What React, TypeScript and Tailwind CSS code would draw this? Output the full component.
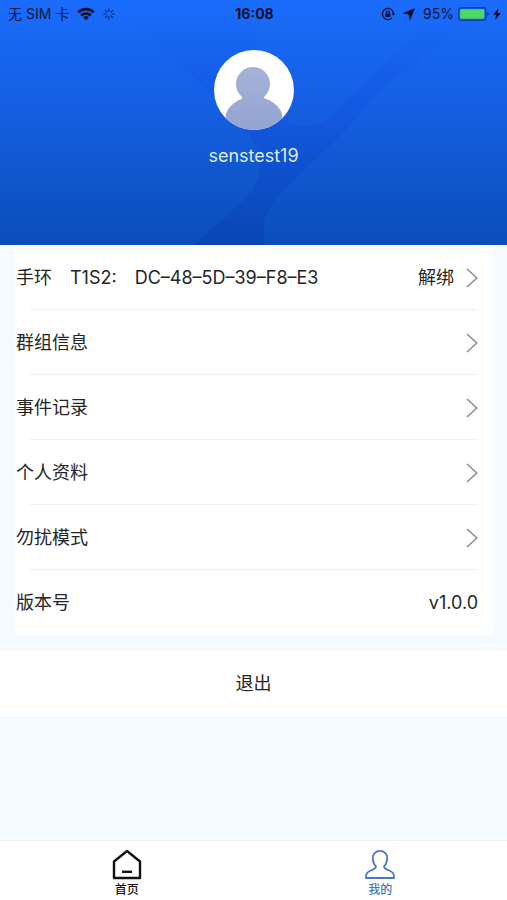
import type { ReactNode } from "react";

type MenuItem = {
  label: string;
};

const menu: MenuItem[] = [
  { label: "群组信息" },
  { label: "事件记录" },
  { label: "个人资料" },
  { label: "勿扰模式" },
];

const spokes = [0, 45, 90, 135, 180, 225, 270, 315];

const StatusBar = () => {
  return (
    <div className="relative flex h-7 items-center pr-1.5 pl-2 text-sm text-[#04163f]">
      <div className="flex flex-1 items-center gap-2">
        <span>无 SIM 卡</span>
        <svg width="18" height="14" viewBox="0 0 18 14" fill="none" stroke="#020d2b" strokeWidth="2.6">
          <path d="M1.2 5.4a11 11 0 0 1 15.6 0" />
          <path d="M4.2 8.5a6.8 6.8 0 0 1 9.6 0" />
          <path d="M9 13.2 6.2 10.4a4 4 0 0 1 5.6 0Z" fill="#020d2b" stroke="none" />
        </svg>
        <svg width="12" height="12" viewBox="0 0 12 12" stroke="#08307f" strokeWidth="1.2" strokeLinecap="round">
          {spokes.map((deg) => (
            <path key={deg} d="M6 .8v2.4" transform={`rotate(${deg} 6 6)`} />
          ))}
        </svg>
      </div>
      <span className="font-bold text-[#020d2b]">16:08</span>
      <div className="flex flex-1 items-center justify-end">
        <svg className="mr-2" width="14" height="14" viewBox="0 0 14 14" fill="none" stroke="#020d2b" strokeWidth="1.2">
          <path d="M11 10.8A5.6 5.6 0 1 1 12.5 6.4" />
          <path d="M10.6 6.3h3.4l-1.7 2.4z" fill="#020d2b" stroke="none" />
          <rect x="4.4" y="6.4" width="5" height="3.6" rx=".5" fill="#020d2b" stroke="none" />
          <path d="M5.4 6.6V5.5a1.5 1.5 0 0 1 3 0v1.1" />
        </svg>
        <svg className="mr-2" width="12" height="12" viewBox="0 0 12 12" fill="#020d2b" stroke="#020d2b" strokeWidth=".8" strokeLinejoin="round">
          <path d="M11.400.8 7 11.400 6.200 6.200.6 5.200Z" />
        </svg>
        <span className="mr-1">95%</span>
        <svg width="31" height="14" viewBox="0 0 31 14">
          <rect x=".7" y=".7" width="27" height="12.6" rx="2.6" fill="none" stroke="#0b3fa8" strokeWidth="1.4" />
          <rect x="2.2" y="2.2" width="24" height="9.6" rx="1" fill="#4cd964" />
          <path d="M29 5v4a2 2 0 0 0 0-4Z" fill="#0b3fa8" />
        </svg>
        <svg className="ml-1" width="8" height="12" viewBox="0 0 8 12" fill="#020d2b">
          <path d="M5.4 0 .2 6.8h2.9L2.3 12 7.8 4.9H4.6Z" />
        </svg>
      </div>
    </div>
  );
};

const HeaderWaves = () => {
  return (
    <svg
      className="absolute inset-0 h-full w-full"
      viewBox="0 0 507 244"
      preserveAspectRatio="none"
      aria-hidden="true"
    >
      <defs>
        <linearGradient id="band" x1="0" y1="0" x2="0" y2="1">
          <stop offset=".05" stopColor="#1550f0" stopOpacity="0" />
          <stop offset=".45" stopColor="#1050e0" stopOpacity=".4" />
          <stop offset="1" stopColor="#0840b0" stopOpacity=".65" />
        </linearGradient>
      </defs>
      <path
        d="M112 0C145 35 175 58 215 98C236 117 251 132 259 153C264 178 251 194 233 209C219 222 206 232 195 244H265C260 216 270 205 283 190C315 158 340 138 358 116C380 84 430 50 507 0H450C410 42 375 72 333 114C320 127 298 130 283 118C265 95 255 50 250 0Z"
        fill="url(#band)"
      />
    </svg>
  );
};

const Avatar = () => {
  return (
    <svg className="mx-auto h-20 w-20" viewBox="0 0 80 80" role="img" aria-label="avatar">
      <defs>
        <clipPath id="face">
          <circle cx="40" cy="40" r="40" />
        </clipPath>
        <linearGradient id="person" gradientUnits="userSpaceOnUse" x1="0" y1="17" x2="0" y2="80">
          <stop offset="0" stopColor="#a6b2d6" />
          <stop offset="1" stopColor="#94a4d2" />
        </linearGradient>
      </defs>
      <circle cx="40" cy="40" r="40" fill="#fff" />
      <g clipPath="url(#face)" fill="url(#person)">
        <circle cx="39" cy="34" r="17" />
        <ellipse cx="40" cy="68" rx="28.5" ry="21" />
        <path d="M29 46h20l2 4H27Z" />
      </g>
    </svg>
  );
};

const Chevron = () => {
  return (
    <svg width="12" height="20" viewBox="0 0 12 20" fill="none" stroke="#8f8f8f" strokeWidth="1.6">
      <path d="m1 1 9.8 9L1 19" />
    </svg>
  );
};

const Row = ({ children }: { children: ReactNode }) => {
  return (
    <li>
      {children}
      <div className="mx-[15px] h-px bg-[#f1f1f3]" />
    </li>
  );
};

const App = () => {
  return (
    <div className="flex min-h-screen flex-col bg-[#f6fbff] font-['Inter','Noto_Sans_CJK_SC',sans-serif] text-lg text-[#252525]">
      <header className="relative h-[245px] bg-linear-to-b from-[#1a6cfb] via-[#145dde] to-[#0b4eb9]">
        <HeaderWaves />
        <StatusBar />
        <div className="relative pt-[22px] text-center">
          <Avatar />
          <p className="mt-3 text-lg text-[#dcebff]">senstest19</p>
        </div>
      </header>

      <main className="flex-1">
        <ul className="mx-[15px] bg-white">
          <Row>
            <div className="flex h-16 items-center pt-0.5 pr-3.5 pl-px">
              <span className="mr-[18px]">手环</span>
              <span className="mr-[18px]">T1S2:</span>
              <span>DC–48–5D–39–F8–E3</span>
              <button className="ml-auto flex items-center gap-3">
                解绑
                <Chevron />
              </button>
            </div>
          </Row>
          {menu.map((item) => (
            <Row key={item.label}>
              <button className="flex h-16 w-full items-center justify-between pt-0.5 pr-3.5 pl-px text-left">
                {item.label}
                <Chevron />
              </button>
            </Row>
          ))}
          <li className="flex h-[65px] items-center justify-between pr-3.5 pl-px">
            <span>版本号</span>
            <span>v1.0.0</span>
          </li>
        </ul>

        <button className="mt-4 h-[65px] w-full bg-white text-center">退出</button>
      </main>

      <nav className="flex h-[60px] border-t border-[#eef1f4] bg-white text-xs font-medium">
        <a href="#home" className="flex flex-1 flex-col items-center pt-2 text-[#111]">
          <svg width="30" height="32" viewBox="0 0 30 32" fill="none" stroke="#111" strokeWidth="2.4">
            <path d="M2 12.500 15 2 28 12.500V29H2Z" strokeLinejoin="round" />
            <path d="M10 22.800h10" />
          </svg>
          <span className="leading-[18px]">首页</span>
        </a>
        <a href="#mine" className="flex flex-1 flex-col items-center pt-2 text-[#4a76c9]">
          <svg width="30" height="32" viewBox="0 0 30 32" fill="none" stroke="#4a76c9" strokeWidth="1.8">
            <path
              d="M11 17.500C8.500 15 7.800 12 7.800 9A7.200 7.200 0 0 1 22.200 9C22.200 12 21.500 15 19 17.500C19 19.500 20.500 20 23 21C27 22.500 29 24 29 27V29H1V27C1 24 3 22.500 7 21C9.500 20 11 19.500 11 17.500Z"
              strokeLinejoin="round"
            />
          </svg>
          <span className="leading-[18px]">我的</span>
        </a>
      </nav>
    </div>
  );
};

export default App;
